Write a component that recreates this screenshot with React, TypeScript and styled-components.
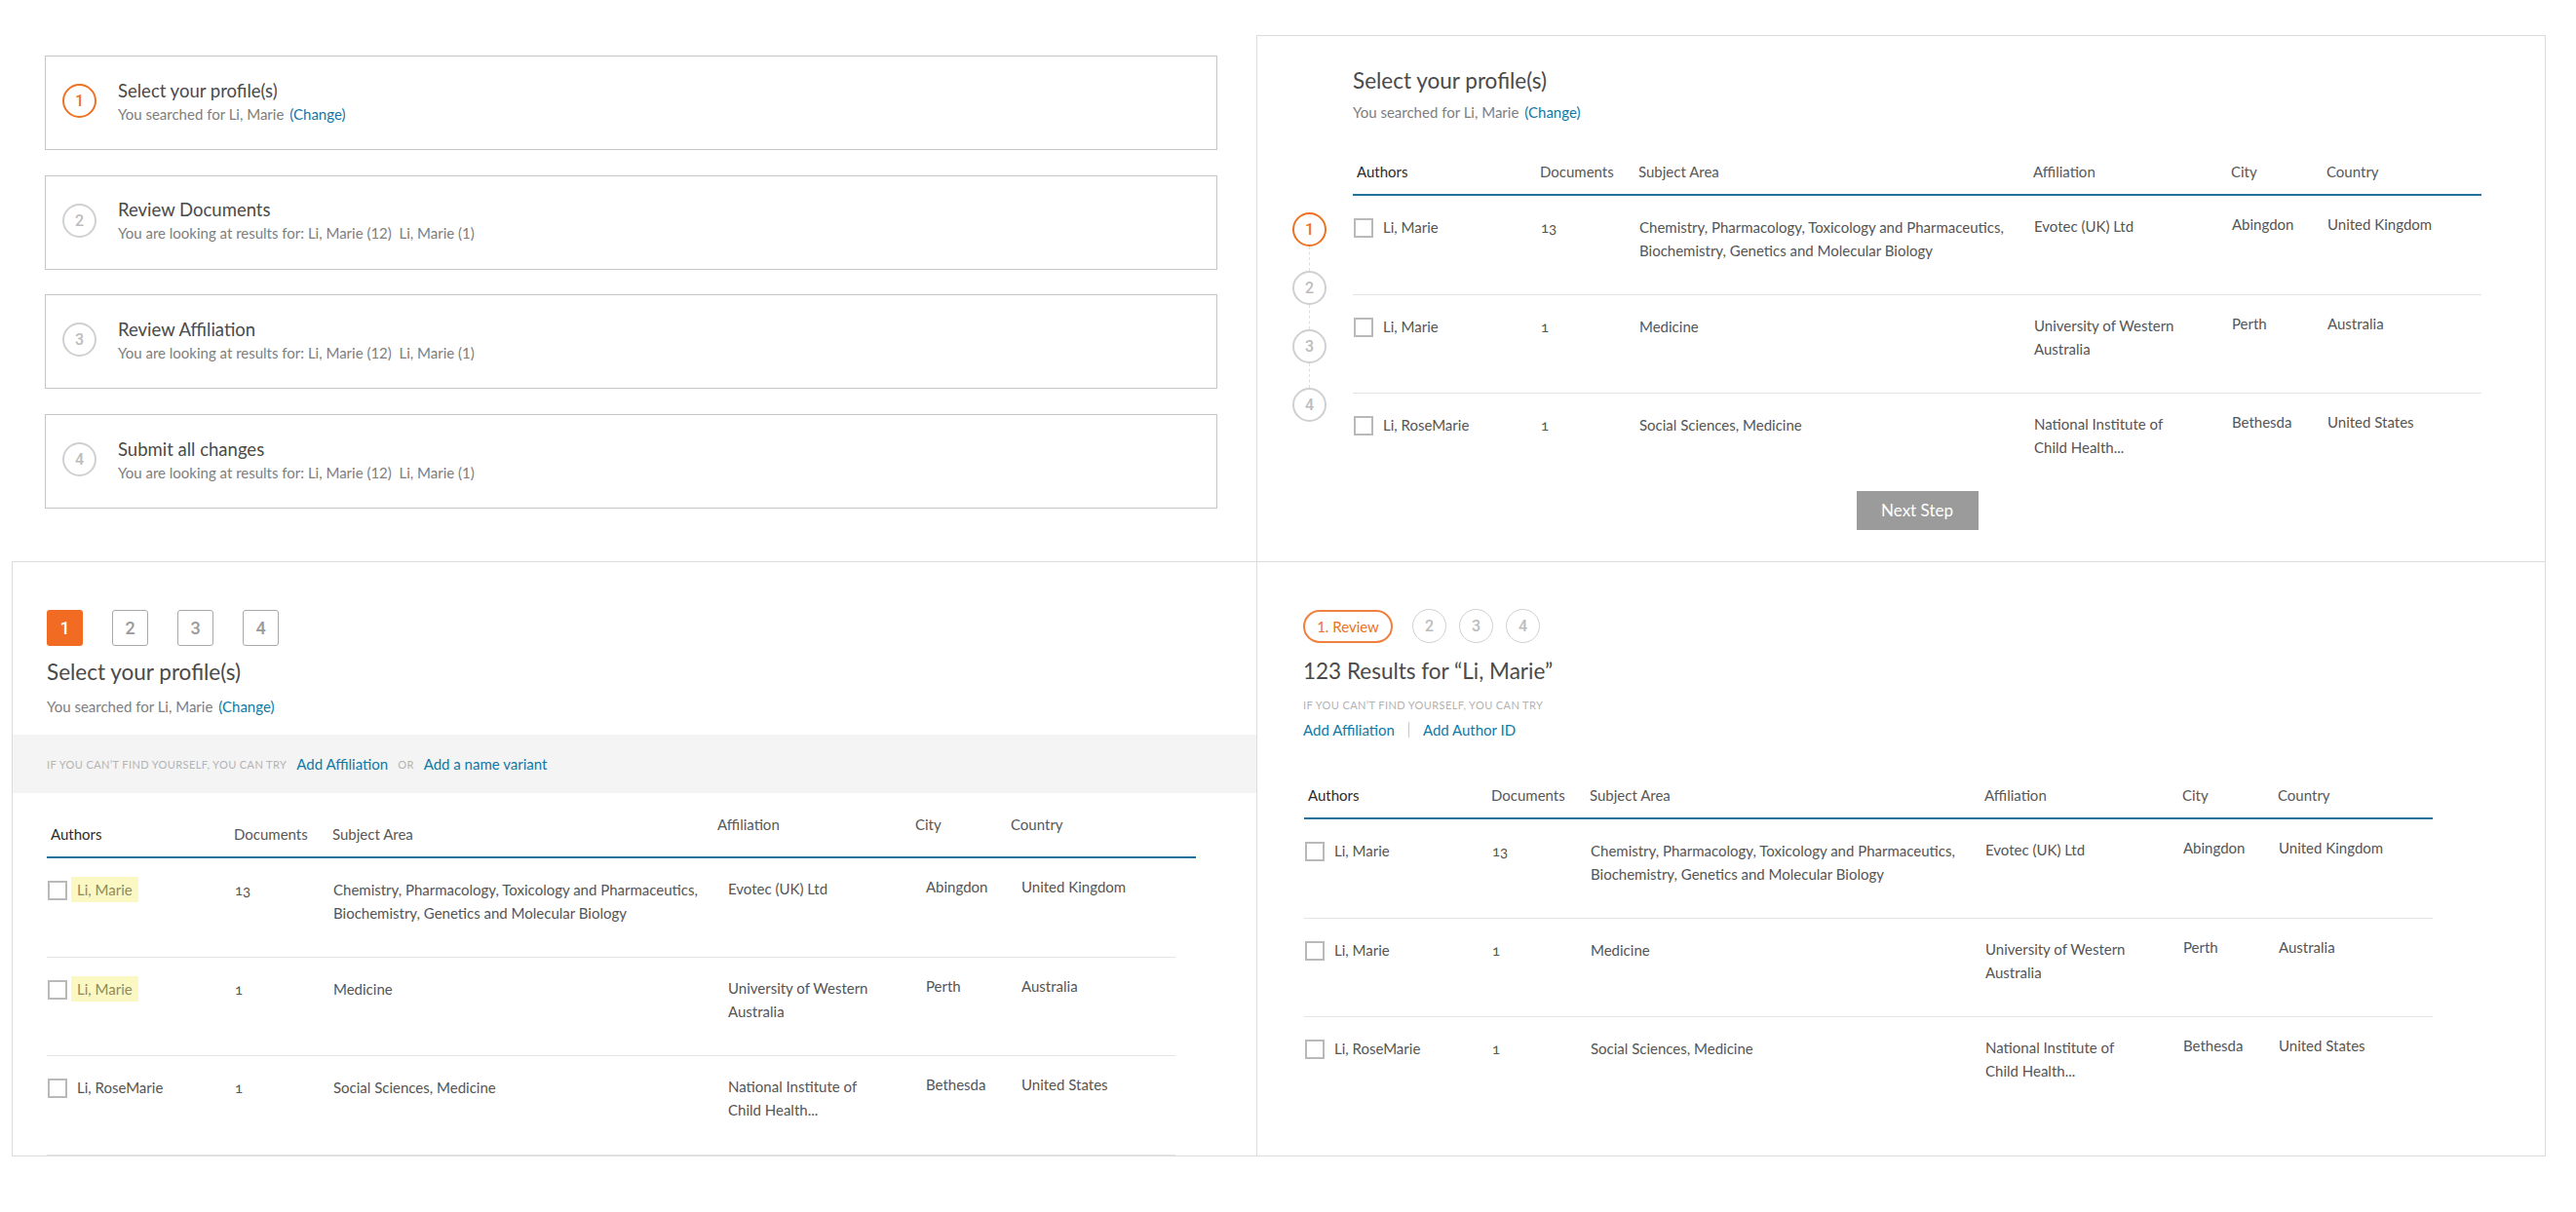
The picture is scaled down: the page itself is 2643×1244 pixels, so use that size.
import React from 'react';
import styled, { createGlobalStyle, css } from 'styled-components';

const orange = '#ef7121';
const link = '#0f79a6';
const rule = '#22739a';

const GlobalStyle = createGlobalStyle`
  html, body {
    margin: 0;
    padding: 0;
    background: #ffffff;
  }
  body {
    font-family: Lato, 'Open Sans', 'Liberation Sans', sans-serif;
    color: #555555;
  }
  * {
    box-sizing: border-box;
  }
`;

const Page = styled.div`
  display: grid;
  grid-template-columns: 1289px 1323px;
  grid-template-rows: 576px 611px;
  width: 2643px;
  height: 1244px;
`;

/* ---------- shared bits ---------- */

const Heading = styled.h2`
  margin: 0;
  font-size: 22.5px;
  line-height: 28px;
  font-weight: 400;
  color: #4a4a4a;
`;

const SearchNote = styled.div<{ $gap?: number }>`
  margin-top: ${p => p.$gap ?? 8}px;
  font-size: 15px;
  line-height: 20px;
  color: #7e7e7e;
`;

const TextLink = styled.a`
  color: ${link};
  text-decoration: none;
  font-size: 15px;
  cursor: pointer;
`;

const ChangeLink = styled(TextLink)`
  margin-left: 6px;
`;

const Caps = styled.span`
  font-size: 11px;
  letter-spacing: 0.4px;
  text-transform: uppercase;
  color: #b3b3b3;
`;

const Circle = styled.div<{ $active?: boolean; $thin?: boolean }>`
  width: 35px;
  height: 35px;
  flex-shrink: 0;
  border-radius: 50%;
  border: ${p => (p.$thin ? 1.5 : 2)}px solid ${p => (p.$active ? orange : '#d0d0d0')};
  color: ${p => (p.$active ? orange : '#bcbcbc')};
  display: flex;
  align-items: center;
  justify-content: center;
  font-family: Roboto, Lato, sans-serif;
  font-weight: 500;
  font-size: 16px;
`;

/* ---------- results table ---------- */

const columns = css`
  display: grid;
  grid-template-columns: 192px 101px 405px 203px 98px 1fr;
`;

const Table = styled.div<{ $top?: number }>`
  width: 1158px;
  margin-top: ${p => p.$top ?? 0}px;
`;

const HeadRow = styled.div<{ $extend?: boolean }>`
  ${columns}
  align-items: end;
  padding-bottom: 13px;
  border-bottom: 2px solid ${rule};
  margin-right: ${p => (p.$extend ? -21 : 0)}px;
  font-size: 15px;
  line-height: 20px;
  color: #585858;
`;

const HeadCell = styled.div<{ $first?: boolean; $shifted?: boolean }>`
  padding-left: ${p => (p.$first ? 4 : 0)}px;
  color: ${p => (p.$first ? '#2b2b2b' : '#585858')};
  margin: ${p => (p.$shifted ? '-10px 0 10px -10px' : '0')};
`;

const BodyRow = styled.div<{ $closed?: boolean }>`
  ${columns}
  align-items: start;
  height: 101.5px;
  padding: 20px 0 0 1px;
  border-bottom: 1px solid #e3e3e3;
  font-size: 15px;
  line-height: 24px;
  color: #555555;

  &:first-child {
    height: 98px;
    padding-top: 16px;
  }

  ${p =>
    !p.$closed &&
    css`
      &:last-child {
        border-bottom: none;
      }
    `}
`;

const AuthorCell = styled.div`
  display: flex;
  align-items: flex-start;
  gap: 10px;
`;

const Checkbox = styled.span`
  width: 20px;
  height: 20px;
  margin-top: 3px;
  border: 2px solid #b9b9b9;
  background: #ffffff;
  flex-shrink: 0;
`;

const Name = styled.span<{ $highlight?: boolean }>`
  ${p =>
    p.$highlight &&
    css`
      background: #fcf8c3;
      color: #8e8b5e;
      padding: 1px 6px;
      margin: -1px 0 0 -6px;
    `}
`;

const Count = styled.div`
  font-variant-numeric: oldstyle-nums;
`;

const Cell = styled.div<{ $lift?: number }>`
  margin-top: ${p => -(p.$lift ?? 0)}px;
`;

type Row = {
  name: string;
  docs: string;
  subject: string[];
  affiliation: string[];
  city: string;
  country: string;
  match: boolean;
};

const ROWS: Row[] = [
  {
    name: 'Li, Marie',
    docs: '13',
    subject: ['Chemistry, Pharmacology, Toxicology and Pharmaceutics,', 'Biochemistry, Genetics and Molecular Biology'],
    affiliation: ['Evotec (UK) Ltd'],
    city: 'Abingdon',
    country: 'United Kingdom',
    match: true,
  },
  {
    name: 'Li, Marie',
    docs: '1',
    subject: ['Medicine'],
    affiliation: ['University of Western', 'Australia'],
    city: 'Perth',
    country: 'Australia',
    match: true,
  },
  {
    name: 'Li, RoseMarie',
    docs: '1',
    subject: ['Social Sciences, Medicine'],
    affiliation: ['National Institute of', 'Child Health...'],
    city: 'Bethesda',
    country: 'United States',
    match: false,
  },
];

const Lines = ({ lines }: { lines: string[] }) => (
  <>
    {lines.map((l, i) => (
      <React.Fragment key={i}>
        {i > 0 && <br />}
        {l}
      </React.Fragment>
    ))}
  </>
);

type TableProps = {
  top?: number;
  highlight?: boolean;
  shifted?: boolean;
  extend?: boolean;
  closed?: boolean;
};

const ResultsTable = ({ top, highlight, shifted, extend, closed }: TableProps) => (
  <Table $top={top}>
    <HeadRow $extend={extend}>
      <HeadCell $first>Authors</HeadCell>
      <HeadCell>Documents</HeadCell>
      <HeadCell>Subject Area</HeadCell>
      <HeadCell $shifted={shifted}>Affiliation</HeadCell>
      <HeadCell $shifted={shifted}>City</HeadCell>
      <HeadCell $shifted={shifted}>Country</HeadCell>
    </HeadRow>
    {ROWS.map((r, i) => (
      <BodyRow key={i} $closed={closed}>
        <AuthorCell>
          <Checkbox />
          <Name $highlight={highlight && r.match}>{r.name}</Name>
        </AuthorCell>
        <Count>{r.docs}</Count>
        <Cell>
          <Lines lines={r.subject} />
        </Cell>
        <Cell $lift={1}>
          <Lines lines={r.affiliation} />
        </Cell>
        <Cell $lift={3}>{r.city}</Cell>
        <Cell $lift={3}>{r.country}</Cell>
      </BodyRow>
    ))}
  </Table>
);

/* ---------- top left: step cards ---------- */

const Overview = styled.section`
  display: flex;
  flex-direction: column;
  gap: 25.7px;
  padding: 57px 0 0 46px;
`;

const StepCard = styled.div`
  width: 1203px;
  height: 97px;
  border: 1px solid #c6c6c6;
  display: flex;
  align-items: center;
  gap: 22px;
  padding: 0 0 4px 17px;
`;

const CardTitle = styled.div`
  font-size: 18.5px;
  line-height: 24px;
  color: #4a4a4a;
`;

const CardNote = styled.div`
  margin-top: 2px;
  font-size: 15px;
  line-height: 20px;
  color: #7e7e7e;
`;

const STEPS = ['Select your profile(s)', 'Review Documents', 'Review Affiliation', 'Submit all changes'];

/* ---------- top right: rail layout ---------- */

const Panel = styled.section<{ $edges: string }>`
  border: 1px solid #dcdcdc;
  ${p => p.$edges}
`;

const RailPanel = styled(Panel)`
  margin-top: 36px;
  display: flex;
  padding: 32px 0 0 36px;
`;

const Rail = styled.div`
  width: 35px;
  padding-top: 149px;
  display: flex;
  flex-direction: column;
  align-items: center;
`;

const Connector = styled.div`
  width: 0;
  height: 25px;
  border-left: 1px dashed #dedede;
`;

const RailMain = styled.div`
  margin-left: 27px;
  width: 1158px;
  display: flex;
  flex-direction: column;
`;

const NextButton = styled.button`
  align-self: center;
  width: 125px;
  height: 40px;
  margin-top: -2px;
  border: none;
  background: #9b9b9b;
  color: #ffffff;
  font-family: inherit;
  font-size: 17px;
`;

/* ---------- bottom left: square tabs ---------- */

const TabPanel = styled(Panel)`
  margin-left: 12px;
  padding: 49px 0 0 35px;
`;

const Squares = styled.div`
  display: flex;
  gap: 30px;
`;

const Square = styled.div<{ $active?: boolean }>`
  width: 37px;
  height: 37px;
  border-radius: 3px;
  display: flex;
  align-items: center;
  justify-content: center;
  font-family: Roboto, Lato, sans-serif;
  font-weight: 500;
  font-size: 18px;
  ${p =>
    p.$active
      ? css`
          background: #f26b22;
          color: #ffffff;
        `
      : css`
          border: 1.5px solid #a9a9a9;
          color: #9a9a9a;
        `}
`;

const TitleBlock = styled.div<{ $top: number }>`
  margin-top: ${p => p.$top}px;
`;

const Band = styled.div`
  margin: 19px 0 0 -35px;
  height: 60px;
  background: #f4f4f4;
  display: flex;
  align-items: center;
  gap: 10px;
  padding-left: 35px;
`;

/* ---------- bottom right: pill steps ---------- */

const PillPanel = styled(Panel)`
  padding: 48px 0 0 47px;
`;

const StepStrip = styled.div`
  display: flex;
  align-items: center;
  gap: 13px;
`;

const Pill = styled.div`
  width: 92px;
  height: 34px;
  margin-right: 7px;
  border: 2px solid #f0803f;
  border-radius: 17px;
  display: flex;
  align-items: center;
  justify-content: center;
  color: ${orange};
  font-size: 15px;
`;

const Hint = styled.div`
  margin-top: 11px;
  line-height: 16px;
`;

const LinkRow = styled.div`
  margin-top: 7px;
  display: flex;
  align-items: center;
  gap: 14px;
  line-height: 20px;
`;

const Divider = styled.span`
  width: 1px;
  height: 16px;
  background: #c9c9c9;
`;

const Inset = styled.div`
  padding-left: 1px;
`;

export default function App() {
  return (
    <>
      <GlobalStyle />
      <Page>
        <Overview>
          {STEPS.map((s, i) => (
            <StepCard key={s}>
              <Circle $active={i === 0}>{i + 1}</Circle>
              <div>
                <CardTitle>{s}</CardTitle>
                <CardNote>
                  {i === 0 ? (
                    <>
                      You searched for Li, Marie
                      <ChangeLink>(Change)</ChangeLink>
                    </>
                  ) : (
                    <>You are looking at results for: Li, Marie (12)&nbsp;&nbsp;Li, Marie (1)</>
                  )}
                </CardNote>
              </div>
            </StepCard>
          ))}
        </Overview>

        <RailPanel $edges="border-bottom: none;">
          <Rail>
            {[1, 2, 3, 4].map(n => (
              <React.Fragment key={n}>
                {n > 1 && <Connector />}
                <Circle $active={n === 1}>{n}</Circle>
              </React.Fragment>
            ))}
          </Rail>
          <RailMain>
            <Heading>Select your profile(s)</Heading>
            <SearchNote>
              You searched for Li, Marie
              <ChangeLink>(Change)</ChangeLink>
            </SearchNote>
            <ResultsTable top={41} />
            <NextButton>Next Step</NextButton>
          </RailMain>
        </RailPanel>

        <TabPanel $edges="border-right: none;">
          <Squares>
            {[1, 2, 3, 4].map(n => (
              <Square key={n} $active={n === 1}>
                {n}
              </Square>
            ))}
          </Squares>
          <TitleBlock $top={13}>
            <Heading>Select your profile(s)</Heading>
            <SearchNote $gap={11}>
              You searched for Li, Marie
              <ChangeLink>(Change)</ChangeLink>
            </SearchNote>
          </TitleBlock>
          <Band>
            <Caps>If you can’t find yourself, you can try</Caps>
            <TextLink>Add Affiliation</TextLink>
            <Caps>or</Caps>
            <TextLink>Add a name variant</TextLink>
          </Band>
          <ResultsTable top={32} highlight shifted extend closed />
        </TabPanel>

        <PillPanel $edges="">
          <StepStrip>
            <Pill>1. Review</Pill>
            {[2, 3, 4].map(n => (
              <Circle key={n} $thin>
                {n}
              </Circle>
            ))}
          </StepStrip>
          <TitleBlock $top={15}>
            <Heading>123 Results for “Li, Marie”</Heading>
          </TitleBlock>
          <Hint>
            <Caps>If you can’t find yourself, you can try</Caps>
          </Hint>
          <LinkRow>
            <TextLink>Add Affiliation</TextLink>
            <Divider />
            <TextLink>Add Author ID</TextLink>
          </LinkRow>
          <Inset>
            <ResultsTable top={47} />
          </Inset>
        </PillPanel>
      </Page>
    </>
  );
}
